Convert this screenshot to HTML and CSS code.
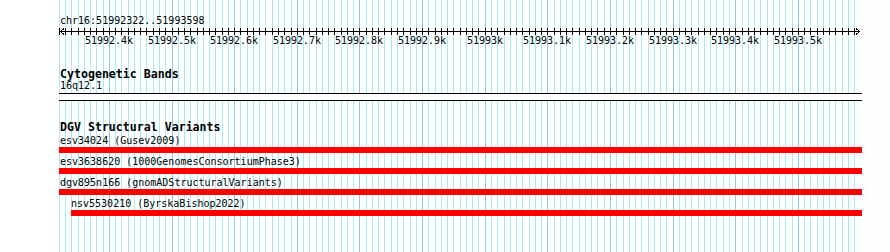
FILE: index.html
```html
<!DOCTYPE html>
<html lang="en">
<head>
  <meta charset="UTF-8">
  <title>Genome Browser</title>
  <link rel="stylesheet" href="styles.css">
</head>
<body>
  <div class="genome-view">
    <div class="gutter"></div>

    <div class="view" id="view">
      <svg class="grid" id="grid" width="803" height="252"></svg>

      <div class="locus">chr16:51992322..51993598</div>

      <div class="ruler" id="ruler">
        <svg class="axis" id="axis" width="803" height="10"></svg>
      </div>

      <div class="track cytobands">
        <div class="track-label">Cytogenetic Bands</div>
        <div class="feature-label">16q12.1</div>
        <div class="band"></div>
      </div>

      <div class="track dgv">
        <div class="track-label">DGV Structural Variants</div>
        <div class="features">
          <div class="feature" data-start="51992321">
            <div class="feature-label">esv34024 (Gusev2009)</div>
            <div class="bar"></div>
          </div>
          <div class="feature" data-start="51992321">
            <div class="feature-label">esv3638620 (1000GenomesConsortiumPhase3)</div>
            <div class="bar"></div>
          </div>
          <div class="feature" data-start="51992321">
            <div class="feature-label">dgv895n166 (gnomADStructuralVariants)</div>
            <div class="bar"></div>
          </div>
          <div class="feature inner" data-start="51992340">
            <div class="feature-label">nsv5530210 (ByrskaBishop2022)</div>
            <div class="bar"></div>
          </div>
        </div>
      </div>
    </div>

    <div class="filler"></div>
  </div>

  <script>
    const viewStart = 51992321;
    const scale = 0.62636; // px per bp

    // x offset inside the view for a base position
    function bpToX(bp) {
      return Math.floor(50.4 + (bp - 51992400) * scale);
    }

    const grid = document.getElementById('grid');
    const axis = document.getElementById('axis');
    const ruler = document.getElementById('ruler');
    let gridLines = '';
    let ticks = '';

    for (let bp = 51992320; bp <= 51993590; bp += 10) {
      const x = bpToX(bp) + 0.5;
      const major = bp % 100 === 0;
      gridLines += `<line class="${major ? 'major' : 'minor'}" x1="${x}" y1="0" x2="${x}" y2="252"/>`;
      ticks += `<line x1="${x}" y1="2" x2="${x}" y2="9"/>`;

      if (major) {
        const label = document.createElement('span');
        label.className = 'tick-label';
        label.textContent = (bp / 1000).toString() + 'k';
        label.style.left = bpToX(bp) + 'px';
        ruler.appendChild(label);
      }
    }

    grid.innerHTML = gridLines;
    axis.innerHTML = ticks +
      '<line x1="1" y1="5.5" x2="801" y2="5.5"/>' +
      '<polyline points="5,2.5 1.5,5.5 5,8.5"/>' +
      '<polyline points="797,2.5 800.5,5.5 797,8.5"/>';

    // Place features by their start coordinate (clamped to the view)
    document.querySelectorAll('.feature').forEach((feature) => {
      const start = Number(feature.dataset.start);
      if (start > viewStart) {
        feature.style.marginLeft = bpToX(start) + 'px';
      }
    });
  </script>
</body>
</html>
```

FILE: styles.css
```css
body {
  margin: 0;
  padding: 0;
  font-family: "DejaVu Sans Mono", "Liberation Mono", monospace;
  font-size: 10px;
  color: #000;
  background-color: #FFFFFF;
}

.genome-view {
  display: flex;
  height: 252px;
  overflow: hidden;
}

.gutter {
  flex: none;
  width: 59px;
}

.view {
  position: relative;
  flex: none;
  width: 803px;
}

.filler {
  flex: 1;
  background-color: #FBFEFB;
}

/* grid lies behind every track */
.grid {
  position: absolute;
  top: 0;
  left: 0;
  shape-rendering: crispEdges;
}

.grid .minor {
  stroke: #A8ECEE;
  stroke-width: 1;
}

.grid .major {
  stroke: #8CC8EA;
  stroke-width: 1;
}

.locus,
.ruler,
.track {
  position: relative;
}

.locus {
  padding: 15px 0 0 1px;
  line-height: 11px;
}

.ruler {
  height: 22px;
}

.axis {
  display: block;
  stroke: #000;
  stroke-width: 1;
  fill: none;
  shape-rendering: crispEdges;
}

.tick-label {
  position: absolute;
  top: 9px;
  line-height: 11px;
  transform: translateX(-50%);
  white-space: nowrap;
}

.track {
  margin-top: 20px;
}

.track-label {
  padding-left: 1px;
  font-size: 11.6px;
  font-weight: bold;
  line-height: 12px;
}

.feature-label {
  padding-left: 1px;
  line-height: 11px;
  white-space: nowrap;
}

.band {
  height: 8px;
  margin-top: 2px;
  box-sizing: border-box;
  border-top: 1px solid #000;
  border-bottom: 1px solid #000;
  background-color: #FFFFFF;
}

.features {
  margin-top: 2px;
}

.feature {
  margin-bottom: 3px;
}

.feature.inner .feature-label {
  margin-left: -1px;
}

.bar {
  height: 6px;
  margin-top: 1px;
  background-color: #FF0000;
}
```
